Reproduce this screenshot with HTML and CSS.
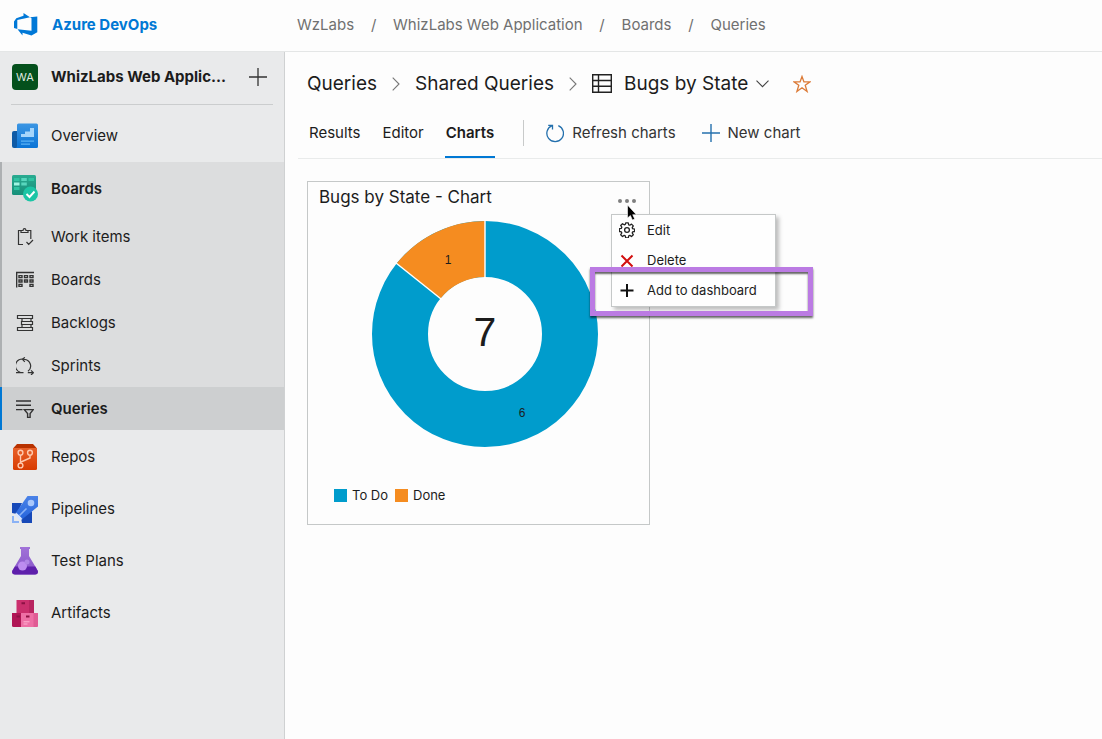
FILE: index.html
```html
<!DOCTYPE html>
<html lang="en">
<head>
<meta charset="utf-8">
<title>Bugs by State - Azure DevOps</title>
<link rel="stylesheet" href="styles.css">
</head>
<body>
<div class="app">
  <header class="topbar">
    <a class="brand" href="#">
      <svg width="26" height="26" viewBox="0 0 26 26" fill="#0078d7" fill-rule="evenodd"><path d="M1 9.500 3.300 6.300 10.500 3.700V1l6.500 4.300L4.300 8v9L1 16z"/><path d="M18.500 6.200 17 5.300 24.300 4.500v15.800L18.500 23.500 9.500 20.800v2.700L4.500 17.300l14 1.500z"/></svg>
      <span>Azure DevOps</span>
    </a>
    <nav class="crumbs" aria-label="Breadcrumb">
      <a href="#">WzLabs</a><span class="slash">/</span><a href="#">WhizLabs Web Application</a><span class="slash">/</span><a href="#">Boards</a><span class="slash">/</span><a href="#">Queries</a>
    </nav>
  </header>

  <aside class="sidebar">
    <div class="project">
      <span class="avatar">WA</span>
      <a class="project-name" href="#">WhizLabs Web Applic...</a>
      <button class="add" aria-label="Add"><svg width="18" height="18" viewBox="0 0 18 18" stroke="#333" stroke-width="1.300"><path d="M9 0v18M0 9h18"/></svg></button>
    </div>
    <nav class="menu" aria-label="Project">
      <a class="hub" href="#">
        <svg width="26" height="26" viewBox="0 0 26 26"><defs><linearGradient id="ov" x2="0" y2="1"><stop stop-color="#3c96e3"/><stop offset="1" stop-color="#0a74d6"/></linearGradient></defs><path d="M0 10q0-2 2-2h4v17H2q-2 0-2-2z" fill="#0f5ba6"/><path d="M5 2q0-1.500 1.500-1.500h18Q26 .5 26 2v21.500q0 1.500-1.500 1.500H3.500Q5 25 5 23z" fill="url(#ov)"/><path d="M9 14v-3h4V8.500h5V5h4v9z" fill="#a5d5fb"/><path d="M9 18.200h13M9 21.200h9" stroke="#5ab2f5" stroke-width="1.300"/></svg>
        <span>Overview</span></a>
      <div class="group">
        <a class="hub strong" href="#">
          <svg width="26" height="27" viewBox="0 0 26 27"><defs><linearGradient id="bd" x2="0" y2="1"><stop stop-color="#2aab91"/><stop offset="1" stop-color="#168f79"/></linearGradient></defs><rect width="24" height="20" rx="1.500" fill="url(#bd)"/><path d="M2 3h5.500v3H2zM16.500 3H22v3h-5.500zM2 12h5.500v3H2z" fill="#2fc3a2"/><path d="M9.300 3h5.500v3H9.300zM9.300 7.500h5.500v3H9.300z" fill="#58d6bd"/><path d="M2 7.500h5.500v3H2z" fill="#9ff5e2"/><circle cx="18.500" cy="19" r="7.500" fill="#1cc5a5"/><path d="m14.500 19 3 3 5-5.500" fill="none" stroke="#fff" stroke-width="1.900"/></svg>
          <span>Boards</span></a>
        <a class="sub" href="#">
          <svg width="18" height="18" viewBox="0 0 18 18"><path d="M7 16.500H2.500V2.500H5M12 2.500h2.800V11M5 4.500v-2h2q.2-1.900 1.500-1.900T10 2.500h2v2zM10.500 14l2.200 2.300L17 12"/></svg>
          <span>Work items</span></a>
        <a class="sub" href="#">
          <svg width="18" height="18" viewBox="0 0 18 18"><path d="M0 1.600h18M.6 1v15.500" stroke-width="1.500"/><path d="M3 4.600h3v2H3zM8.500 4.600h3v2h-3zM14 4.600h3v2h-3zM3 9h3v2H3zM8.500 9h3v2h-3zM14 9h3v2h-3zM3 13.400h3v2H3zM14 13.400h3v2h-3z" stroke-width="1.400"/></svg>
          <span>Boards</span></a>
        <a class="sub" href="#">
          <svg width="18" height="18" viewBox="0 0 18 18"><path d="M1.500 1.500h15v3h-15zM5.500 7.500h11v3h-11zM1.500 13.500h15v3h-15zM6 4.500v3M15 4.500v3M6 10.500v3M15 10.500v3"/></svg>
          <span>Backlogs</span></a>
        <a class="sub" href="#">
          <svg width="18" height="18" viewBox="0 0 18 18"><path d="M0 15.700h7.500M4.200 15.300A6.700 6.700 0 0 1 8.200 2.300A6.700 6.700 0 0 1 12 14.300M8.800.3 6.500 2.400 8.800 4.800M11.800 15.700h5.500M15 13.300l2.400 2.400L15 18"/></svg>
          <span>Sprints</span></a>
        <a class="sub current" href="#" aria-current="page">
          <svg width="18" height="18" viewBox="0 0 18 18"><path d="M0 1h15M0 5.300h15M0 9.600h6.500M8.300 9.600h9l-3.200 4v3.800h-2.500v-3.800z" stroke-width="1.400"/></svg>
          <span>Queries</span></a>
      </div>
      <a class="hub" href="#">
        <svg width="26" height="26" viewBox="0 0 26 26"><defs><linearGradient id="rp" x2="0" y2="1"><stop stop-color="#e8612a"/><stop offset="1" stop-color="#d83b01"/></linearGradient></defs><path d="M1 4.500 5 0h16l4 4.500z" fill="#b83200"/><path d="M1 4h24v20.500q0 1.500-1.500 1.500h-21Q1 26 1 24.500z" fill="url(#rp)"/><g fill="none" stroke="#ffc9ae" stroke-width="1.400"><circle cx="8.500" cy="8.700" r="2.400"/><circle cx="18" cy="8.700" r="2.400"/><circle cx="8.500" cy="21.500" r="2.400"/><path d="M8.500 11v8.200M18 11v3l-9 4"/></g></svg>
        <span>Repos</span></a>
      <a class="hub" href="#">
        <svg width="26" height="27" viewBox="0 0 26 27"><defs><linearGradient id="pl" x2="0" y2="1"><stop stop-color="#4b83e8"/><stop offset="1" stop-color="#2765dc"/></linearGradient></defs><path d="M0 7h10L5 18l-5-1zM20 15v12H10l-1-5z" fill="#1749b8"/><path d="M15.500 0H26v10.500L10.500 23 4 16.500z" fill="url(#pl)"/><circle cx="19" cy="7" r="3.300" fill="#a9c7fb"/><path d="m7.500 19.500 7-7" stroke="#8bb2f5" stroke-width="1.600"/><path d="M4 16.500 10.500 23 8 24.500 3 19z" fill="#d9e6ff"/><path d="M1 20v6h6" fill="none" stroke="#8bb2f5" stroke-width="2"/></svg>
        <span>Pipelines</span></a>
      <a class="hub" href="#">
        <svg width="26" height="28" viewBox="0 0 26 28"><defs><linearGradient id="tp" x2="0" y2="1"><stop stop-color="#a173d8"/><stop offset="1" stop-color="#8654c8"/></linearGradient></defs><path d="M8 0h10v2h-1v7l9 15q0 3.500-3 3.500H3Q0 27.500 0 24L9 9V2H8z" fill="url(#tp)"/><path d="M3 19.500h20.300l2.700 5q0 3-3 3H3q-3 0-3-3z" fill="#5e20ab"/><circle cx="10.500" cy="19" r="4.500" fill="#bd8cf0"/><circle cx="15" cy="15" r="2.500" fill="#b086e6"/></svg>
        <span>Test Plans</span></a>
      <a class="hub" href="#">
        <svg width="26" height="27" viewBox="0 0 26 27"><path d="M4.500 0H22v13H4.500z" fill="#cb2f6d"/><path d="M17 0h5v13h-5z" fill="#b82560"/><path d="M0 13h9v14H1.500Q0 27 0 25.500z" fill="#b01655"/><path d="M9 13h17v12.500q0 1.500-1.500 1.500H9z" fill="#ee6fa5"/><path d="M21.500 13H26v12.500q0 1.500-1.500 1.500h-3z" fill="#e05c94"/><path d="M9.500 3.200h3.500M4.500 16.500h3.500M14 16.500h3.500" stroke="#8d1244" stroke-width="2"/><path d="M11.500 21.800h6M11.500 24h4" stroke="#ffb4d3"/></svg>
        <span>Artifacts</span></a>
    </nav>
  </aside>

  <main class="content">
    <div class="heading">
      <a href="#">Queries</a>
      <svg class="chev" width="8" height="14" viewBox="0 0 8 14"><path d="m.7.7 6.300 6.300-6.300 6.300"/></svg>
      <a href="#">Shared Queries</a>
      <svg class="chev" width="8" height="14" viewBox="0 0 8 14"><path d="m.7.7 6.300 6.300-6.300 6.300"/></svg>
      <svg class="grid-icon" width="20" height="19" viewBox="0 0 20 19" fill="none" stroke="#222" stroke-width="1.400"><path d="M.7.7h18.600v17.500H.7zM6.500.7v17.500M.7 6.500h18.600M.7 12.300h18.600"/></svg>
      <button class="query-name">Bugs by State
        <svg width="13" height="8" viewBox="0 0 13 8" fill="none" stroke="#444" stroke-width="1.100"><path d="m.5.7 6 6 6-6"/></svg></button>
      <button class="star" aria-label="Favorite"><svg width="18" height="18" viewBox="0 0 18 18" fill="none" stroke="#dc7b38" stroke-width="1.300"><path d="m9 1.500 1.900 5.300h6.100l-4.800 3.500 1.900 6.200L9 12.800l-5.100 3.700 1.900-6.200L1 6.800h6.100z"/></svg></button>
    </div>
    <div class="toolbar">
      <nav class="tabs" aria-label="Views">
        <a href="#">Results</a><a href="#">Editor</a><a class="active" href="#" aria-current="page">Charts</a>
      </nav>
      <div class="actions">
        <button><svg width="18" height="19" viewBox="0 0 18 19" fill="none" stroke="#2470ad" stroke-width="1.300"><path d="M12.300 1.600A8.300 8.300 0 1 1 6 1.600M2.200 1.300h4.300v4.300"/></svg>Refresh charts</button>
        <button><svg width="18" height="18" viewBox="0 0 18 18" stroke="#2470ad" stroke-width="1.400"><path d="M9 0v18M0 9h18"/></svg>New chart</button>
      </div>
    </div>

    <section class="card">
      <div class="card-head">
        <h2>Bugs by State - Chart</h2>
        <button class="more" aria-label="More actions"><svg width="18" height="4" viewBox="0 0 18 4" fill="#7f7f7f"><circle cx="2" cy="2" r="2"/><circle cx="9" cy="2" r="2"/><circle cx="16" cy="2" r="2"/></svg></button>
      </div>
      <svg class="donut" width="228" height="228" viewBox="-114 -114 228 228" role="img" aria-label="7 bugs: 6 To Do, 1 Done">
        <circle r="85" fill="none" stroke="#009ccc" stroke-width="56"/>
        <path d="M0-113A113 113 0 0 0-88.350-70.450L-44.560-35.540A57 57 0 0 1 0-57z" fill="#f58c20"/>
        <path d="M0-114v58M-89-71l46 36.700" stroke="#fff" stroke-width="1.400"/>
        <text class="total" x="0" y="12">7</text>
        <text class="slice" x="-37" y="-70">1</text>
        <text class="slice" x="37" y="83">6</text>
      </svg>
      <ul class="legend">
        <li><i class="todo"></i>To Do</li>
        <li><i class="done"></i>Done</li>
      </ul>

      <div class="popup">
        <button><svg width="16" height="16" viewBox="0 0 16 16" fill="none" stroke="#222" stroke-width="1.300"><circle cx="8" cy="8" r="2.400"/><path stroke-linejoin="round" d="M6.700.8h2.600l.4 2 1.100.4 1.700-1.100 1.800 1.800-1.100 1.700.4 1.100 2 .4v2.400l-2 .4-.4 1.100 1.100 1.700-1.800 1.800-1.700-1.100-1.100.4-.4 2H6.700l-.4-2-1.100-.4-1.700 1.100-1.800-1.800 1.100-1.700-.4-1.100-2-.4V6.700l2-.4.4-1.100-1.100-1.700 1.800-1.800 1.700 1.100 1.100-.4z"/></svg>Edit</button>
        <button><svg width="16" height="16" viewBox="0 0 16 16" stroke="#d20f0f" stroke-width="2"><path d="m2.500 3.500 11 11M13.500 3.500l-11 11"/></svg>Delete</button>
        <button><svg width="16" height="16" viewBox="0 0 16 16" stroke="#111" stroke-width="2"><path d="M8 2v13M1.500 8.500h13"/></svg>Add to dashboard</button>
      </div>
      <div class="callout"></div>
      <svg class="pointer" width="11" height="17" viewBox="0 0 11 17"><path d="M1.500 1v13l2.900-2.500 2 4.500 2.300-1-2-4.300h3.700z" fill="#000" stroke="#fff" stroke-width=".6"/></svg>
    </section>
  </main>
</div>
</body>
</html>
```

FILE: styles.css
```css
* { box-sizing: border-box; }

body {
  margin: 0;
  background: #fdfdfd;
  color: #1c1c1c;
  font: 15px/20px Inter, "Liberation Sans", sans-serif;
}

a { color: inherit; text-decoration: none; }

button {
  padding: 0;
  border: 0;
  background: none;
  color: inherit;
  font: inherit;
}

svg { display: block; flex: none; }

.app {
  display: grid;
  grid-template-columns: 285px 1fr;
  grid-template-rows: auto 1fr;
  min-height: 100vh;
}

.topbar {
  grid-column: 1 / -1;
  display: grid;
  grid-template-columns: 285px 1fr;
  align-items: center;
  height: 52px;
  padding-bottom: 2px;
  border-bottom: 1px solid #e4e6e6;
}

.brand {
  display: flex;
  align-items: center;
  gap: 13px;
  padding-left: 13px;
  color: #0078d4;
  font-weight: 700;
}

.crumbs { display: flex; padding-left: 12px; color: #707070; }
.slash { width: 39px; text-align: center; }

.sidebar {
  background: #e9eaeb;
  border-right: 1px solid #cfd1d2;
}

.project {
  display: flex;
  align-items: center;
  height: 53px;
  margin: 0 11px 4px;
  padding: 0 6px 2px 1px;
  border-bottom: 1px solid #cbcdce;
}

.avatar {
  width: 26px;
  border-radius: 4px;
  background: #04501c;
  color: #dfe9e1;
  font-size: 11px;
  line-height: 26px;
  text-align: center;
}

.project-name {
  flex: 1;
  margin-left: 13px;
  font-weight: 700;
  white-space: nowrap;
}

.hub, .sub { display: flex; align-items: center; }
.hub { gap: 13px; height: 53px; padding-left: 12px; }
.group ~ .hub { height: 52px; }
.sub { gap: 17px; height: 43px; padding-left: 16px; }
.sub svg { fill: none; stroke: #333; stroke-width: 1.2; }
.strong, .current { font-weight: 600; }

.group {
  margin-bottom: 1px;
  background: #dcddde;
  box-shadow: inset 2px 0 #adb0b2;
}

.current {
  background: #cdcfd0;
  box-shadow: inset 2px 0 #0078d4;
}

.content { padding: 0 0 24px 13px; }

.heading {
  display: flex;
  align-items: center;
  height: 63px;
  padding-left: 9px;
  font-size: 19px;
  line-height: 24px;
}

.chev {
  margin: 0 15px;
  fill: none;
  stroke: #777;
  stroke-width: 1.1;
}

.grid-icon { margin-right: 12px; }
.query-name { display: flex; align-items: center; gap: 8px; }
.star { margin-left: 24px; }

.toolbar {
  display: flex;
  align-items: center;
  height: 44px;
  padding-left: 10px;
  border-bottom: 1px solid #e9ebeb;
}

.tabs { display: flex; align-self: stretch; gap: 20px; }
.tabs a { padding: 8px 1px 0; }

.tabs .active {
  border-bottom: 2px solid #0078d4;
  font-weight: 600;
}

.actions {
  display: flex;
  align-items: center;
  align-self: flex-start;
  gap: 26px;
  height: 26px;
  margin: 5px 0 0 28px;
  padding-left: 22px;
  border-left: 1px solid #c8caca;
  color: #333;
}

.actions button { display: flex; align-items: center; gap: 8px; }

.card {
  position: relative;
  width: 343px;
  margin: 22px 0 0 9px;
  border: 1px solid #c5c8c8;
}

.card-head {
  display: flex;
  align-items: center;
  justify-content: space-between;
  padding: 3px 13px 0 11px;
}

.card h2 {
  margin: 0;
  font-size: 17px;
  font-weight: 400;
  line-height: 24px;
}

.more { padding-top: 7px; }
.donut { margin: 11px auto 37px 63px; }

.total, .slice { fill: #1c1c1c; text-anchor: middle; }
.total { font-family: "Liberation Sans", sans-serif; font-size: 41px; }
.slice { font-family: "Liberation Sans", sans-serif; font-size: 12px; }

.legend {
  display: flex;
  gap: 7px;
  margin: 0;
  padding: 0 26px 19px;
  font-size: 13px;
  list-style: none;
}

.legend li { display: flex; align-items: center; gap: 5px; }
.legend i { width: 13px; height: 13px; }
.todo { background: #009ccc; }
.done { background: #f58c20; }

.popup {
  position: absolute;
  top: 32px;
  left: 303px;
  width: 165px;
  padding-bottom: 1px;
  border: 1px solid #c5c8c8;
  background: #fefefe;
  box-shadow: 3px 3px 4px rgba(0, 0, 0, .25);
  font-size: 13px;
}

.popup button {
  display: flex;
  align-items: center;
  gap: 12px;
  width: 100%;
  height: 30px;
  padding-left: 7px;
}

.callout {
  position: absolute;
  top: 85px;
  left: 282px;
  width: 223px;
  height: 49px;
  border: 5px solid #bb7be3;
  box-shadow: 0 2px 2px rgba(0, 0, 0, .6), inset 0 2px 2px rgba(0, 0, 0, .6);
  pointer-events: none;
}

.pointer { position: absolute; top: 22px; left: 318px; }
```
